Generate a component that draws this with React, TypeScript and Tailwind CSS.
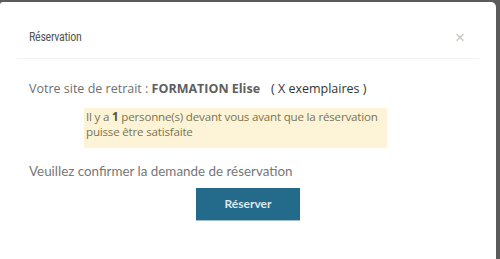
import React from 'react';

const App: React.FC = () => {
  return (
    <div className="w-[500px] h-[259px] bg-[#5b5b5b] pt-[2px] pr-[4px] overflow-hidden">
      <div className="h-full bg-white rounded-tr-[5px] rounded-tl-[3px] px-[17px]">
        {/* header */}
        <div className="flex items-center justify-between h-[57px] pt-[14px] pl-[12px] pr-[14px] border-b border-[#f3f3f3]">
          <span className="text-[12px] text-[#555] font-['Roboto',sans-serif] [font-stretch:condensed] tracking-[-0.3px]">
            Réservation
          </span>
          <span className="text-[17px] leading-none text-[#c4c4c4] font-['Liberation_Sans',sans-serif]">×</span>
        </div>

        {/* body */}
        <div className="pl-[12px] pt-[21px]">
          <p className="text-[12.5px] leading-[18px] text-[#6f6f6f] font-['Open_Sans',sans-serif]">
            Votre site de retrait : <b className="font-bold text-[#5e5e5e]">FORMATION Elise</b>
            <span className="ml-[11px] text-[#333]">( X exemplaires )</span>
          </p>
          <div className="ml-[55px] mt-[10px] w-[303px] bg-[#fdf4d8] px-[2px] pt-[1px] pb-[9px] text-[11.6px] tracking-[-0.2px] leading-[15px] text-[#7a7352] font-['Open_Sans',sans-serif]">
            Il y a <b className="font-bold text-[#5a5438]">1</b> personne(s) devant vous avant que la réservation puisse être satisfaite
          </div>
          <p className="mt-[14px] text-[13.4px] leading-[18px] text-[#777] font-['Lato',sans-serif]">
            Veuillez confirmer la demande de réservation
          </p>
        </div>
        <div className="flex justify-center mt-[8px]">
          <button className="w-[104px] h-[33px] bg-[#246b8b] text-[#dce8ee] text-[12px] font-bold font-['Lato',sans-serif] border-b border-[#9fbfcd]">
            Réserver
          </button>
        </div>
      </div>
    </div>
  );
};

export default App;
